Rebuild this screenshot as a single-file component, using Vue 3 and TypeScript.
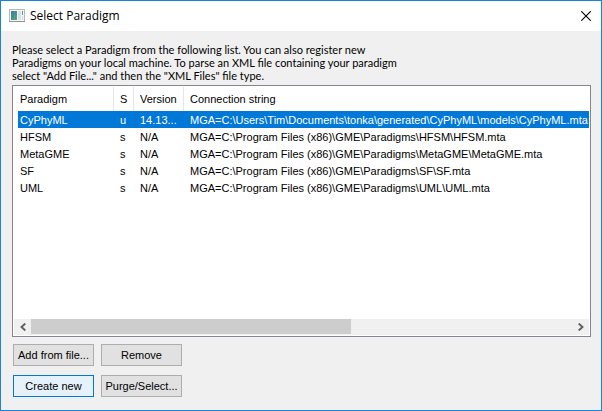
<script setup lang="ts">
import { ref } from 'vue'

interface Paradigm {
  name: string
  scope: 'u' | 's'
  version: string
  connection: string
}

const paradigms: Paradigm[] = [
  { name: 'CyPhyML', scope: 'u', version: '14.13...', connection: 'MGA=C:\\Users\\Tim\\Documents\\tonka\\generated\\CyPhyML\\models\\CyPhyML.mta' },
  { name: 'HFSM', scope: 's', version: 'N/A', connection: 'MGA=C:\\Program Files (x86)\\GME\\Paradigms\\HFSM\\HFSM.mta' },
  { name: 'MetaGME', scope: 's', version: 'N/A', connection: 'MGA=C:\\Program Files (x86)\\GME\\Paradigms\\MetaGME\\MetaGME.mta' },
  { name: 'SF', scope: 's', version: 'N/A', connection: 'MGA=C:\\Program Files (x86)\\GME\\Paradigms\\SF\\SF.mta' },
  { name: 'UML', scope: 's', version: 'N/A', connection: 'MGA=C:\\Program Files (x86)\\GME\\Paradigms\\UML\\UML.mta' },
]

const selected = ref('CyPhyML')
</script>

<template>
  <main class="dialog">
    <header class="titlebar">
      <svg class="app-icon" width="16" height="14" viewBox="0 0 16 14" aria-hidden="true">
        <defs>
          <linearGradient id="pane" x1="0" y1="0" x2="1" y2="1">
            <stop offset="0" stop-color="#3f78a4" />
            <stop offset="1" stop-color="#4fae74" />
          </linearGradient>
        </defs>
        <rect x="0.5" y="0.5" width="15" height="12" fill="#f4f5f6" stroke="#b4babe" />
        <rect x="0" y="12" width="16" height="1" fill="#8d9499" />
        <rect x="2" y="2" width="6" height="9" fill="url(#pane)" />
        <rect x="9" y="2" width="3" height="9" fill="#dde1e4" />
        <rect x="13" y="2" width="1" height="4" fill="#5f9c8e" />
        <rect x="13" y="7" width="1" height="4" fill="#d5dade" />
      </svg>
      <h1 class="title">Select Paradigm</h1>
      <button class="close" type="button" aria-label="Close">
        <svg width="10" height="10" viewBox="0 0 10 10" aria-hidden="true">
          <path d="M0.3 0.3 9.7 9.7M9.7 0.3 0.3 9.7" fill="none" stroke="#000" stroke-width="1.1" />
        </svg>
      </button>
    </header>

    <section class="content">
      <p class="intro">
        Please select a Paradigm from the following list. You can also register new<br />
        Paradigms on your local machine. To parse an XML file containing your paradigm<br />
        select "Add File..." and then the "XML Files" file type.
      </p>

      <div class="list">
        <div class="list-view">
          <table class="table">
            <colgroup>
              <col class="col-name" />
              <col class="col-scope" />
              <col class="col-version" />
              <col />
            </colgroup>
            <thead>
              <tr>
                <th scope="col">Paradigm</th>
                <th scope="col">S</th>
                <th scope="col">Version</th>
                <th scope="col">Connection string</th>
              </tr>
            </thead>
            <tbody>
              <tr
                v-for="p in paradigms"
                :key="p.name"
                :class="{ selected: p.name === selected }"
                @click="selected = p.name"
              >
                <td>{{ p.name }}</td>
                <td>{{ p.scope }}</td>
                <td>{{ p.version }}</td>
                <td>{{ p.connection }}</td>
              </tr>
            </tbody>
          </table>
        </div>
        <div class="scrollbar">
          <button class="arrow" type="button" aria-label="Scroll left">
            <svg width="6" height="8" viewBox="0 0 6 8" aria-hidden="true">
              <path d="M5.3 0.5 1.5 4 5.3 7.5" fill="none" stroke="#606060" stroke-width="1.9" />
            </svg>
          </button>
          <div class="track"><div class="thumb"></div></div>
          <button class="arrow" type="button" aria-label="Scroll right">
            <svg width="6" height="8" viewBox="0 0 6 8" aria-hidden="true">
              <path d="M0.7 0.5 4.5 4 0.7 7.5" fill="none" stroke="#606060" stroke-width="1.9" />
            </svg>
          </button>
        </div>
      </div>

      <div class="actions">
        <button class="btn" type="button">Add from file...</button>
        <button class="btn" type="button">Remove</button>
        <button class="btn active" type="button">Create new</button>
        <button class="btn" type="button">Purge/Select...</button>
      </div>
    </section>
  </main>
</template>

<style>
body {
  margin: 0;
}
</style>

<style scoped>
.dialog {
  box-sizing: border-box;
  min-height: 100vh;
  display: flex;
  flex-direction: column;
  border: 1px solid #1883d7;
  background: #f0f0f0;
  color: #000;
  font: 11px/13px "Liberation Sans", Arial, sans-serif;
}

button {
  font: inherit;
  color: inherit;
  padding: 0;
}

.titlebar {
  display: flex;
  align-items: center;
  height: 30px;
  padding: 0 10px 0 8px;
  background: #fff;
}

.app-icon {
  margin-right: 5px;
}

.title {
  flex: 1;
  margin: 0;
  font: 12px/16px "Open Sans", "Noto Sans", sans-serif;
}

.close {
  display: flex;
  border: 0;
  background: none;
}

.content {
  flex: 1;
  display: flex;
  flex-direction: column;
  padding: 12px 10px 13px 11px;
}

.intro {
  margin: 0 0 3px;
  font-family: Lato, "Liberation Sans", sans-serif;
  white-space: nowrap;
}

.list {
  flex: 1;
  display: flex;
  flex-direction: column;
  padding: 1px;
  border: 1px solid #828790;
  background: #fff;
}

.list-view {
  flex: 1;
  padding-left: 4px;
}

.table {
  width: 100%;
  table-layout: fixed;
  border-collapse: separate;
  border-spacing: 0;
}

.col-name {
  width: 96px;
}

.col-scope {
  width: 20px;
}

.col-version {
  width: 50px;
}

th,
td {
  padding: 1px 0 0 6px;
  text-align: left;
  font-weight: 400;
  white-space: nowrap;
}

th {
  height: 23px;
  border-right: 1px solid #e5e5e5;
}

th:last-child {
  border-right: 0;
}

td {
  height: 16px;
}

th:first-child,
td:first-child {
  padding-left: 2px;
}

.selected {
  background: #0078d7;
  color: #fff;
}

.scrollbar {
  display: flex;
  height: 16px;
  background: #f0f0f0;
}

.arrow {
  display: flex;
  align-items: center;
  justify-content: center;
  width: 17px;
  border: 0;
  background: none;
}

.track {
  flex: 1;
  display: flex;
}

.thumb {
  width: 59.2%;
  height: 15px;
  background: #cdcdcd;
}

.actions {
  display: grid;
  grid-template-columns: 81px 81px;
  gap: 9px 7px;
  padding: 7px 0 0 1px;
}

.btn {
  height: 22px;
  border: 1px solid #adadad;
  background: #e1e1e1;
  white-space: nowrap;
}

.btn.active {
  border-color: #0078d7;
  background: #e5f1fb;
}
</style>
